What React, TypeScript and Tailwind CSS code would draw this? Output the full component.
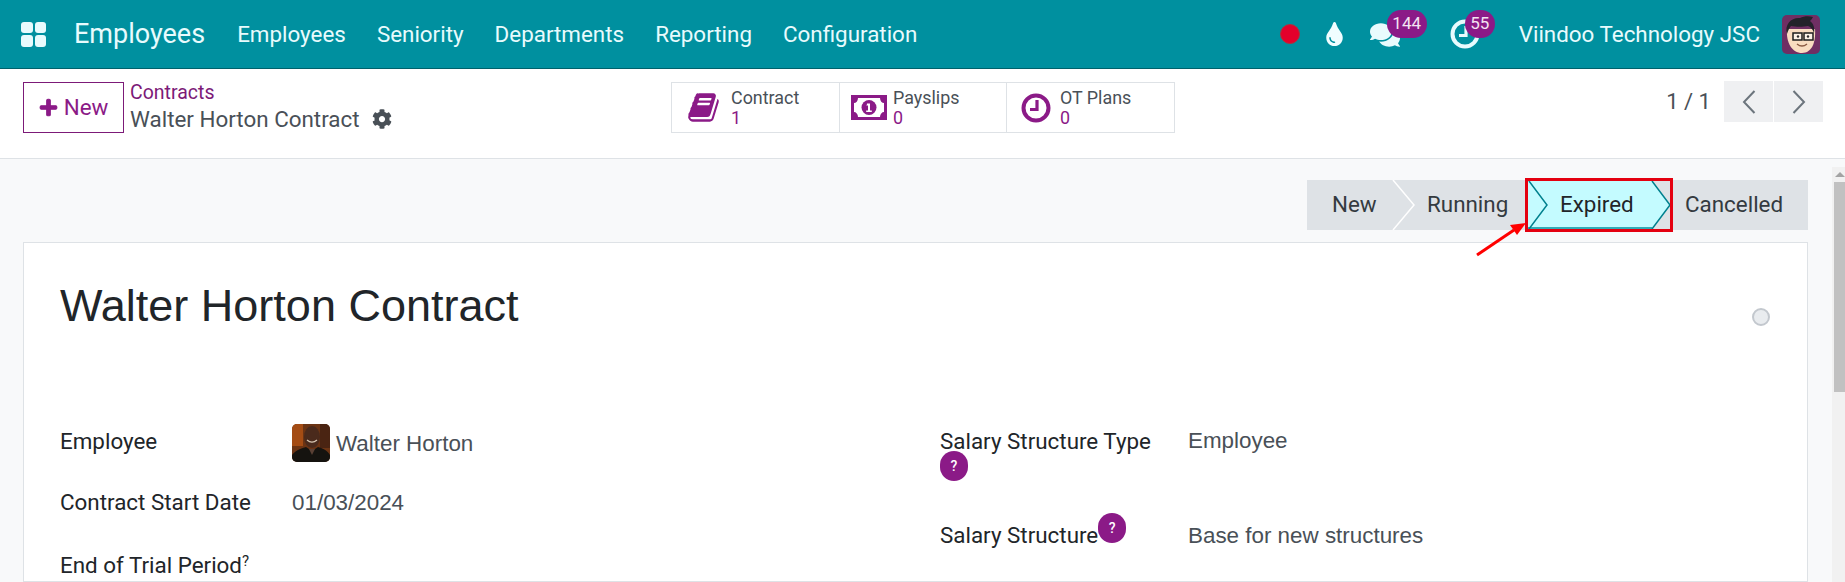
import {FaCog, FaComments, FaPlus, FaTint} from "react-icons/fa";

const navItems = ["Employees", "Seniority", "Departments", "Reporting", "Configuration"];

function BookIcon() {
  return (
    <svg viewBox="0 0 1792 1792" className="h-[33px] w-[33px]" fill="currentColor">
      <path d="M1703 478q40 57 18 129l-275 906q-19 64-76.5 107.5t-122.5 43.5h-923q-77 0-148.5-53.5t-99.5-131.5q-24-67-2-127 0-4 3-27t4-37q1-8-3-21.5t-3-19.5q2-11 8-21t16.5-23.5 16.5-23.5q23-38 45-91.5t30-91.5q3-10 .5-30t-.5-28q3-11 17-28t17-23q21-36 42-92t25-90q1-9-2.5-32t.5-28q4-13 22-30.5t22-22.5q19-26 42.5-84.5t27.5-96.5q1-8-3-25.5t-2-26.5q2-8 9-18t18-23 17-21q8-12 16.5-30.5t15-35 16-36 19.5-32 26.5-23.5 36-11.5 47.5 5.5l-1 3q38-9 51-9h761q74 0 114 56t18 130l-274 906q-36 119-71.5 153.5t-128.5 34.5h-869q-27 0-38 15-11 16-1 43 24 70 144 70h923q29 0 56-15.5t35-41.5l300-987q7-22 5-57 38 15 59 43zm-1064 2q-4 13 2 22.5t20 9.5h608q13 0 25.5-9.5t16.5-22.5l21-64q4-13-2-22.5t-20-9.5h-608q-13 0-25.5 9.5t-16.5 22.5zm-83 256q-4 13 2 22.5t20 9.5h608q13 0 25.5-9.5t16.5-22.5l21-64q4-13-2-22.5t-20-9.5h-608q-13 0-25.5 9.5t-16.5 22.5z" />
    </svg>
  );
}

function MoneyIcon() {
  return (
    <svg viewBox="0 0 36 25" className="h-[25px] w-[36px] text-[#8b1a87]">
      <path fill="currentColor" d="M0 0h36v25H0z" />
      <path fill="#fff" d="M7 3h22c0 3 2 5 4 5v9c-2 0-4 2-4 5H7c0-3-2-5-4-5V8c2 0 4-2 4-5z" />
      <circle cx="18" cy="12.5" r="7.5" fill="currentColor" />
      <path fill="#fff" d="M16 8.5h3v7h1.8v1.5h-5.6v-1.5H17V10.3l-1.4.7z" />
    </svg>
  );
}

function ClockIcon({className}: {className: string}) {
  return (
    <svg viewBox="0 0 30 30" fill="none" stroke="currentColor" strokeWidth="4" className={className}>
      <circle cx="15" cy="15" r="12.5" />
      <path d="M16 7v9.5H9" strokeWidth="3.2" />
    </svg>
  );
}

function UserAvatar() {
  return (
    <svg viewBox="0 0 38 39" className="h-[39px] w-[38px] rounded-[5px]">
      <rect width="38" height="39" fill="#6f2f63" />
      <path d="M5 14c-1 14 5 24 15 24s14-11 13-24z" fill="#f8dcc0" />
      <path d="M5 19C2 9 10 2 18 3c4-2 9-2 13-1-1 2-2 3-3 4 4 3 5 8 4 12-1-3-3-6-6-7-5 1-12 1-17 0-2 2-3 5-4 8z" fill="#23222a" />
      <rect x="11" y="18" width="9" height="7" fill="#fbf1e6" stroke="#1c1c1c" strokeWidth="1.5" />
      <rect x="22" y="18" width="9" height="7" fill="#fbf1e6" stroke="#1c1c1c" strokeWidth="1.5" />
      <circle cx="16" cy="21.5" r="1.2" fill="#2a2a2a" />
      <circle cx="26" cy="21.5" r="1.2" fill="#2a2a2a" />
      <path d="M15 29c3 2.5 7 2.5 10 0" fill="none" stroke="#8a5a42" strokeWidth="1.4" />
    </svg>
  );
}

function WalterAvatar() {
  return (
    <svg viewBox="0 0 38 38" className="h-[38px] w-[38px] rounded-[5px]">
      <rect width="38" height="38" fill="#6b3414" />
      <rect width="11" height="22" fill="#a44c14" />
      <rect x="28" width="10" height="24" fill="#4a2412" />
      <ellipse cx="20" cy="13" rx="8" ry="11" fill="#4a2a1c" />
      <path d="M15 16c3 2.5 7 2.5 10 0" fill="none" stroke="#d8c8b4" strokeWidth="1.2" />
      <path d="M0 38v-7c4-5 10-7 14-8l6 4 6-4c4 1 9 3 12 8v7z" fill="#15130f" />
      <path d="M17 25l3 6 3-6z" fill="#5a4034" />
    </svg>
  );
}

function HelpBadge() {
  return (
    <span className="flex h-[30px] w-[28px] items-center justify-center rounded-full bg-[#8b1a87] text-[14px] font-medium leading-none text-white">
      ?
    </span>
  );
}

function Field({label, value, className}: {label: React.ReactNode; value: React.ReactNode; className: string}) {
  return (
    <div className={`flex text-[22.4px] leading-[30px] ${className}`}>
      <div className="text-[#212529]">{label}</div>
      <div className="text-[#495057]">{value}</div>
    </div>
  );
}

function Stat({icon, label, value, width, iconWidth}: {icon: React.ReactNode; label: string; value: string; width: string; iconWidth: string}) {
  return (
    <div className={`flex h-full items-center border-r border-[#dee2e6] last:border-r-0 ${width}`}>
      <div className={`flex shrink-0 justify-center pl-[4px] text-[#8b1a87] ${iconWidth}`}>{icon}</div>
      <div className="flex flex-col pt-[1px] text-[17.9px] leading-[20px]">
        <span className="text-[#495057]">{label}</span>
        <span className="text-[#8b1a87]">{value}</span>
      </div>
    </div>
  );
}

export default function App() {
  return (
    <div className="flex h-[582px] w-full flex-col overflow-hidden bg-[#f8f9fa] font-['Roboto',sans-serif]">
      <header className="flex h-[69px] shrink-0 items-center border-b border-[#00616b] bg-[#00909f] text-[#e8fbfd]">
        <div className="ml-[21px] grid h-[25px] w-[25px] grid-cols-2 gap-[2px]">
          <span className="rounded-[3px] bg-[#e8fbfd]" />
          <span className="rounded-[3px] bg-[#e8fbfd]" />
          <span className="rounded-[3px] bg-[#e8fbfd]" />
          <span className="rounded-[3px] bg-[#e8fbfd]" />
        </div>
        <span className="ml-[28px] text-[27px]">Employees</span>
        <nav className="ml-[32px] flex gap-[31px] pt-[1px] text-[22.4px]">
          {navItems.map((item) => (
            <span key={item}>{item}</span>
          ))}
        </nav>
        <div className="ml-auto flex items-center">
          <span className="h-[20px] w-[20px] rounded-full border border-[#b0303c] bg-[#e4002b]" />
          <FaTint className="ml-[25px] h-[24px] w-[19px] text-[#f0fdff]" />
          <div className="relative ml-[26px] mr-[50px] pt-[1px]">
            <FaComments className="h-[28px] w-[30px] text-[#e8fbfd]" />
            <span className="absolute left-[17px] top-[-10px] flex h-[28px] w-[40px] items-center justify-center rounded-[14px] bg-[#8b1a87] text-[17px] text-[#f3e4f2]">
              144
            </span>
          </div>
          <div className="relative mr-[39px]">
            <ClockIcon className="h-[30px] w-[30px] text-[#e8fbfd]" />
            <span className="absolute left-[15px] top-[-9px] flex h-[28px] w-[30px] items-center justify-center rounded-[14px] bg-[#8b1a87] text-[17px] text-[#f3e4f2]">
              55
            </span>
          </div>
          <span className="pt-[1px] text-[22.4px]">Viindoo Technology JSC</span>
          <div className="ml-[22px] mr-[25px]">
            <UserAvatar />
          </div>
        </div>
      </header>

      <div className="flex h-[90px] shrink-0 items-start border-b border-[#dee2e6] bg-white">
        <button
          type="button"
          className="ml-[23px] mt-[13px] flex h-[51px] w-[101px] items-center justify-center gap-[6px] border border-[#7c1a78] text-[22.4px] text-[#8b1a87]"
        >
          <FaPlus className="h-[19px] w-[19px]" stroke="currentColor" strokeWidth={30} />
          New
        </button>
        <div className="ml-[6px] mt-[10px] w-[541px] text-[22.4px]">
          <div className="text-[19.5px] leading-[27px] text-[#7c1a78]">Contracts</div>
          <div className="flex items-center gap-[12px] leading-[26px] text-[#495057]">
            Walter Horton Contract
            <FaCog className="h-[20px] w-[20px]" />
          </div>
        </div>
        <div className="mt-[13px] flex h-[51px] w-[504px] border border-[#dee2e6]">
          <Stat icon={<BookIcon />} iconWidth="w-[59px]" label="Contract" value="1" width="w-[168px]" />
          <Stat icon={<MoneyIcon />} iconWidth="w-[53px]" label="Payslips" value="0" width="w-[167px]" />
          <Stat icon={<ClockIcon className="h-[30px] w-[30px]" />} iconWidth="w-[53px]" label="OT Plans" value="0" width="w-[167px]" />
        </div>
        <div className="ml-auto mr-[22px] mt-[12px] flex items-center">
          <span className="mr-[13px] text-[22px] text-[#495057]">1 / 1</span>
          <div className="flex gap-[1px]">
            <span className="flex h-[41px] w-[49px] items-center justify-center bg-[#eff0f2]">
              <svg viewBox="0 0 14 24" className="h-[24px] w-[14px]" fill="none" stroke="#6c757d" strokeWidth="2">
                <path d="M12.5 1 2 12l10.5 11" />
              </svg>
            </span>
            <span className="flex h-[41px] w-[49px] items-center justify-center bg-[#eff0f2]">
              <svg viewBox="0 0 14 24" className="h-[24px] w-[14px]" fill="none" stroke="#6c757d" strokeWidth="2">
                <path d="M1.5 1 12 12 1.5 23" />
              </svg>
            </span>
          </div>
        </div>
      </div>

      <div className="flex min-h-0 flex-1">
        <main className="relative flex min-w-0 flex-1 flex-col pl-[23px] pr-[24px]">
          <div className="mt-[21px] flex h-[50px] self-end bg-[#dee2e6] text-[22.4px] text-[#343a40]">
            <div className="relative flex w-[86px] items-center pl-[25px]">
              New
              <svg viewBox="0 0 24 50" className="absolute left-[85px] top-0 h-[50px] w-[24px]" fill="none" stroke="#fff" strokeWidth="1.5">
                <path d="M1 0 22 25 1 50" />
              </svg>
            </div>
            <div className="flex w-[132px] items-center pl-[34px]">Running</div>
            <div className="relative -my-[2px] flex h-[54px] w-[148px] items-center border-[3px] border-[#e4000f] bg-[#c4fbff] pl-[32px] text-[#212529]">
              <span className="relative">Expired</span>
              <svg viewBox="0 0 142 48" className="absolute left-0 top-0 h-[48px] w-[142px]" fill="none">
                <path d="M124 0 142 24 124 48h18V0z" fill="#dee2e6" />
                <path d="M0 47h124" stroke="#00909f" strokeWidth="1.5" />
                <path d="M1 0 19 24 1 48M124 0l18 24-18 24" stroke="#00808e" strokeWidth="1.5" />
              </svg>
            </div>
            <div className="flex w-[135px] items-center pl-[12px]">Cancelled</div>
          </div>

          <svg viewBox="0 0 52 36" className="absolute left-[1476px] top-[63px] h-[36px] w-[52px]">
            <path d="M1 33 38 8" stroke="#f00" strokeWidth="3" />
            <path d="M50 1 34 3l7 10z" fill="#f00" />
          </svg>

          <section className="mt-[12px] min-h-0 flex-1 border border-[#dee2e6] bg-white">
            <div className="flex items-start justify-between pl-[36px] pr-[37px] pt-[31px]">
              <h1 className="font-['Liberation_Sans',sans-serif] text-[45px] leading-[64px] text-[#212529]">Walter Horton Contract</h1>
              <span className="mt-[34px] h-[18px] w-[18px] rounded-full border-2 border-[#c3c8ce] bg-[#e9ecef]" />
            </div>
            <div className="mt-[87px] grid grid-cols-[880px_1fr] pl-[36px]">
              <div className="flex flex-col">
                <Field
                  className="h-[62px] items-start"
                  label={<div className="w-[232px] pt-[1px]">Employee</div>}
                  value={
                    <div className="flex items-center gap-[6px] font-['Liberation_Sans',sans-serif] text-[#495057]">
                      <span className="-mt-[1px]"><WalterAvatar /></span>
                      <span className="mt-[1px]">Walter Horton</span>
                    </div>
                  }
                />
                <Field
                  className="h-[63px]"
                  label={<div className="w-[232px]">Contract Start Date</div>}
                  value={<span className="font-['Liberation_Sans',sans-serif]">01/03/2024</span>}
                />
                <Field
                  className=""
                  label={
                    <div className="w-[232px]">
                      End of Trial Period<sup className="text-[15px]">?</sup>
                    </div>
                  }
                  value=""
                />
              </div>
              <div className="flex flex-col">
                <Field
                  className="h-[95px]"
                  label={
                    <div className="w-[248px] pt-[1px]">
                      Salary Structure Type
                      <div className="-mt-[5px]"><HelpBadge /></div>
                    </div>
                  }
                  value={<span className="pt-[1px] font-['Liberation_Sans',sans-serif]">Employee</span>}
                />
                <Field
                  className=""
                  label={
                    <div className="flex w-[248px] items-start">
                      Salary Structure
                      <span className="-mt-[7px]"><HelpBadge /></span>
                    </div>
                  }
                  value={<span className="font-['Liberation_Sans',sans-serif]">Base for new structures</span>}
                />
              </div>
            </div>
          </section>
        </main>
        <aside className="mt-[8px] flex w-[13px] shrink-0 flex-col items-end bg-[#f1f1f1]">
          <div className="flex h-[15px] w-[11px] items-center justify-center">
            <span className="border-x-[5px] border-b-[5px] border-x-transparent border-b-[#a3a3a3]" />
          </div>
          <div className="h-[210px] w-[11px] bg-[#c1c1c1]" />
        </aside>
      </div>
    </div>
  );
}
